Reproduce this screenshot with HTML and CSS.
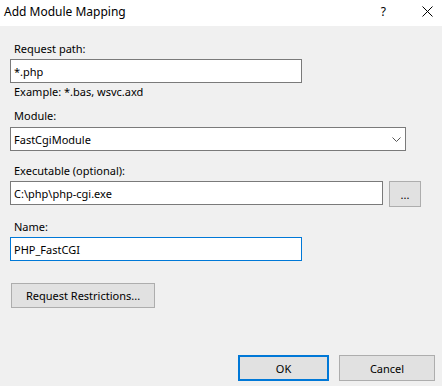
FILE: index.html
```html
<!DOCTYPE html>
<html lang="en">
<head>
    <meta charset="UTF-8">
    <title>Add Module Mapping</title>
    <link rel="stylesheet" href="styles.css">
</head>
<body>
    <div class="dialog">
        <div class="titlebar">
            <span class="title">Add Module Mapping</span>
            <span class="help">?</span>
            <svg class="close" width="11" height="11" viewBox="0 0 11 11">
                <path d="M0.5 0.5 L10.5 10.5 M10.5 0.5 L0.5 10.5" stroke="#000" stroke-width="1" fill="none"/>
            </svg>
        </div>

        <div class="form">
            <label class="label first" for="path">Request path:</label>
            <input class="field short" type="text" id="path" value="*.php">
            <div class="hint">Example: *.bas, wsvc.axd</div>

            <label class="label module">Module:</label>
            <div class="select">
                <span>FastCgiModule</span>
                <svg width="9" height="5" viewBox="0 0 9 5">
                    <path d="M0.5 0.5 L4.5 4.5 L8.5 0.5" stroke="#555" stroke-width="1" fill="none"/>
                </svg>
            </div>

            <label class="label spaced" for="exe">Executable (optional):</label>
            <div class="row">
                <input class="field wide" type="text" id="exe" value="C:\php\php-cgi.exe">
                <button class="btn browse">...</button>
            </div>

            <label class="label spaced" for="name">Name:</label>
            <input class="field short focused" type="text" id="name" value="PHP_FastCGI">

            <button class="btn restrictions">Request Restrictions...</button>
        </div>

        <div class="footer">
            <button class="btn ok">OK</button>
            <button class="btn cancel">Cancel</button>
        </div>
    </div>
</body>
</html>
```

FILE: styles.css
```css
* {
    margin: 0;
    padding: 0;
    box-sizing: border-box;
}
body {
    background-color: #f0f0f0;
    font-family: 'Noto Sans', 'Open Sans', sans-serif;
    font-size: 11px;
    color: #000;
}
.dialog {
    width: 442px;
    height: 386px;
    display: flex;
    flex-direction: column;
}
.titlebar {
    height: 26px;
    background: #fff;
    display: flex;
    align-items: center;
    padding-left: 4px;
}
.title {
    flex: 1;
    font-size: 12px;
    margin-top: -3px;
}
.help {
    font-size: 12px;
    margin-top: -3px;
    margin-right: 36px;
}
.close {
    margin-right: 9px;
    margin-top: -4px;
}
.form {
    padding-left: 10px;
}
.label {
    display: block;
    line-height: 15px;
    padding-left: 4px;
    margin-bottom: 3px;
}
.label.first {
    margin-top: 15px;
}
.label.module {
    margin-top: 9px;
    margin-bottom: 4px;
}
.label.spaced {
    margin-top: 12px;
}
.field {
    display: block;
    height: 24px;
    border: 1px solid #7a7a7a;
    background: #fff;
    padding: 0 3px;
    font-family: 'Noto Sans', 'Open Sans', sans-serif;
    font-size: 11px;
    color: #000;
    outline: none;
}
.field.short {
    width: 292px;
}
.field.wide {
    width: 373px;
}
.field.focused {
    border-color: #0078d7;
}
.hint {
    line-height: 15px;
    padding-left: 4px;
    margin-top: 1px;
}
.select {
    width: 396px;
    height: 24px;
    border: 1px solid #7a7a7a;
    background: #fff;
    display: flex;
    align-items: center;
    justify-content: space-between;
    padding: 0 4px 0 3px;
}
.select svg {
    margin-right: 0;
}
.row {
    display: flex;
    align-items: flex-start;
    gap: 6px;
}
.btn {
    background: #e1e1e1;
    border: 1px solid #adadad;
    font-family: 'Noto Sans', 'Open Sans', sans-serif;
    font-size: 11px;
    color: #000;
    height: 26px;
}
.browse {
    width: 32px;
}
.restrictions {
    display: block;
    width: 144px;
    height: 25px;
    margin-top: 22px;
    margin-left: 1px;
}
.footer {
    margin-top: auto;
    display: flex;
    justify-content: flex-end;
    gap: 10px;
    padding: 0 7px 5px 0;
}
.ok {
    width: 91px;
    border: 2px solid #0078d7;
}
.cancel {
    width: 96px;
}
```
